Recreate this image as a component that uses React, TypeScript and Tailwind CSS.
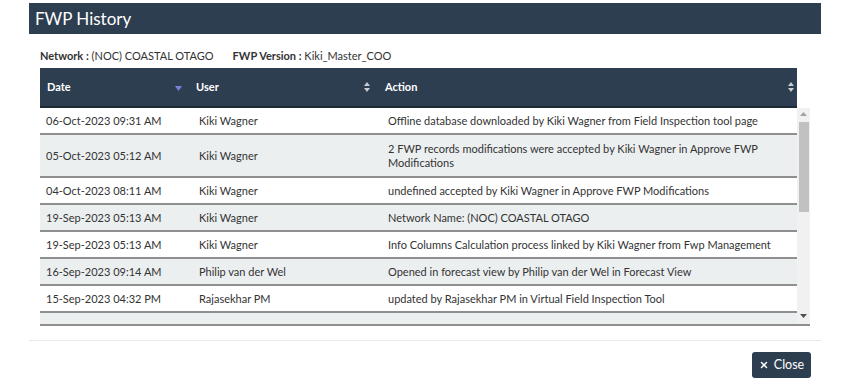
import React from 'react';
import { X } from 'lucide-react';

interface HistoryRow {
  date: string;
  user: string;
  action: string;
  tall?: boolean;
}

const rows: HistoryRow[] = [
  { date: '06-Oct-2023 09:31 AM', user: 'Kiki Wagner', action: 'Offline database downloaded by Kiki Wagner from Field Inspection tool page' },
  { date: '05-Oct-2023 05:12 AM', user: 'Kiki Wagner', action: '2 FWP records modifications were accepted by Kiki Wagner in Approve FWP Modifications', tall: true },
  { date: '04-Oct-2023 08:11 AM', user: 'Kiki Wagner', action: 'undefined accepted by Kiki Wagner in Approve FWP Modifications' },
  { date: '19-Sep-2023 05:13 AM', user: 'Kiki Wagner', action: 'Network Name: (NOC) COASTAL OTAGO' },
  { date: '19-Sep-2023 05:13 AM', user: 'Kiki Wagner', action: 'Info Columns Calculation process linked by Kiki Wagner from Fwp Management' },
  { date: '16-Sep-2023 09:14 AM', user: 'Philip van der Wel', action: 'Opened in forecast view by Philip van der Wel in Forecast View' },
  { date: '15-Sep-2023 04:32 PM', user: 'Rajasekhar PM', action: 'updated by Rajasekhar PM in Virtual Field Inspection Tool' },
];

const SortBoth = () => (
  <svg width="6" height="10" viewBox="0 0 6 10" className="shrink-0">
    <path d="M3 0 L6 4 H0 Z" fill="#c9cdd3" />
    <path d="M3 10 L6 6 H0 Z" fill="#c9cdd3" />
  </svg>
);

const SortDesc = () => (
  <svg width="7" height="5" viewBox="0 0 7 5" className="shrink-0 mt-[3px]">
    <path d="M0 0 H7 L3.5 5 Z" fill="#7c80d6" />
  </svg>
);

const Scrollbar = () => (
  <div className="w-[13px] shrink-0 bg-[#f1f1f1] flex flex-col items-center">
    <svg width="7" height="4" viewBox="0 0 7 4" className="mt-[4px]">
      <path d="M3.5 0 L7 4 H0 Z" fill="#a3a3a3" />
    </svg>
    <div className="mt-[6px] w-[10px] h-[90px] bg-[#c1c1c1]" />
    <div className="flex-1" />
    <svg width="7" height="4" viewBox="0 0 7 4" className="mb-[6px]">
      <path d="M0 0 H7 L3.5 4 Z" fill="#505050" />
    </svg>
  </div>
);

export default function App() {
  return (
    <div className="w-[848px] h-[386px] bg-white pt-[3px] pl-[29px] pr-[27px] font-['Lato','Open_Sans',sans-serif] text-[#333]">
      <div className="h-[31px] bg-[#2d3e50] flex items-center px-[6px]">
        <h1 className="text-[17px] text-white leading-none">FWP History</h1>
      </div>

      <div className="px-[11px]">
        <div className="mt-[14px] h-[16px] flex items-center gap-[19px] text-[11px] text-[#333]">
          <span>
            <b className="font-bold">Network :</b> (NOC) COASTAL OTAGO
          </span>
          <span>
            <b className="font-bold">FWP Version :</b> Kiki_Master_COO
          </span>
        </div>

        <div className="mt-[4px]">
          <div className="w-[757px] h-[40px] bg-[#2d3e50] border-b-2 border-[#1e2a36] grid grid-cols-[148px_189px_1fr] text-white text-[11px] font-bold">
            <div className="flex items-center justify-between pl-[7px] pr-[6px]">
              <span>Date</span>
              <SortDesc />
            </div>
            <div className="flex items-center justify-between pl-[8px] pr-[7px]">
              <span>User</span>
              <SortBoth />
            </div>
            <div className="flex items-center justify-between pl-[8px] pr-[3px]">
              <span>Action</span>
              <SortBoth />
            </div>
          </div>

          <div className="flex border-b-2 border-[#8f8f8f]">
            <div className="w-[757px] h-[216px] overflow-hidden">
              {rows.map((row, i) => (
                <div
                  key={i}
                  className={`grid grid-cols-[159px_189px_1fr] items-center border-b-2 border-[#8f8f8f] text-[11px] leading-[14px] ${
                    row.tall ? 'h-[43px]' : 'h-[27px]'
                  } ${i % 2 === 1 ? 'bg-[#eceff0]' : 'bg-white'}`}
                >
                  <div className="pl-[6px]">{row.date}</div>
                  <div>{row.user}</div>
                  <div className="pr-[10px]">{row.action}</div>
                </div>
              ))}
              <div className="h-[27px] bg-[#eceff0]" />
            </div>
            <Scrollbar />
          </div>
        </div>
      </div>

      <div className="mt-[14px] border-t border-[#e9e9e9] flex justify-end pr-[10px] pt-[11px]">
        <button className="h-[26px] w-[59px] bg-[#2d3e50] rounded-[3px] flex items-center justify-center gap-[5px] text-white text-[12.5px]">
          <X size={10} strokeWidth={3.5} />
          Close
        </button>
      </div>
    </div>
  );
}
